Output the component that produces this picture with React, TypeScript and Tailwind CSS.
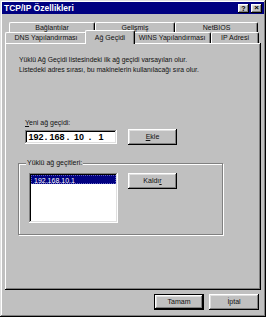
import React from "react"

const raised =
  "bg-[#c0c0c0] shadow-[inset_-1px_-1px_#000,inset_1px_1px_#fff,inset_-2px_-2px_#808080,inset_2px_2px_#dfdfdf]"
const sunken =
  "bg-white shadow-[inset_-1px_-1px_#fff,inset_1px_1px_#808080,inset_-2px_-2px_#dfdfdf,inset_2px_2px_#000]"

function Button({ children, isDefault = false }: { children: React.ReactNode; isDefault?: boolean }) {
  if (isDefault) {
    return (
      <div className="w-[50px] h-[16px] border border-black flex">
        <div className={`${raised} flex-1 flex items-center justify-center`}>{children}</div>
      </div>
    )
  }
  return <div className={`${raised} w-[50px] h-[16px] flex items-center justify-center`}>{children}</div>
}

function Tab({ label, w, selected = false }: { label: string; w: string; selected?: boolean }) {
  if (selected) {
    return (
      <div
        className={`${w} h-[14px] -mx-[2px] -mb-px relative z-10 bg-[#c0c0c0] border-t border-l border-white border-r border-r-black rounded-t-[2px] flex items-start justify-center pt-[2px] shadow-[inset_-1px_0_#808080]`}
      >
        {label}
      </div>
    )
  }
  return (
    <div
      className={`${w} h-full border-t border-l border-white border-r border-r-black rounded-t-[2px] flex items-center justify-center shadow-[inset_-1px_0_#808080]`}
    >
      {label}
    </div>
  )
}

export default function App() {
  return (
    <div className="w-[266px] h-[317px] bg-[#c0c0c0] flex flex-col font-['Liberation_Sans',Arial,sans-serif] text-[7px] leading-[10px] text-[#111] shadow-[inset_-1px_-1px_#000,inset_1px_1px_#dfdfdf,inset_-2px_-2px_#808080,inset_2px_2px_#fff] overflow-hidden">
      {/* タイトルバー */}
      <div className="mx-[2px] mt-[2px] h-[12px] bg-[#000080] flex items-center justify-between pl-[2px] pr-[2px]">
        <span className="text-white font-bold text-[8.5px] leading-[12px]">TCP/IP Özellikleri</span>
        <div className="flex gap-[2px]">
          <div className={`${raised} w-[11px] h-[9px] flex items-center justify-center font-bold text-[7px] leading-none text-black`}>?</div>
          <div className={`${raised} w-[11px] h-[9px] flex items-center justify-center font-bold text-[8px] leading-none text-black`}>×</div>
        </div>
      </div>

      {/* タブ */}
      <div className="mt-[8px] ml-[9px] flex h-[10px]">
        <Tab label="Bağlantılar" w="w-[86px]" />
        <Tab label="Gelişmiş" w="w-[80px]" />
        <Tab label="NetBIOS" w="w-[83px]" />
      </div>
      <div className="ml-[5px] flex items-end h-[11px]">
        <Tab label="DNS Yapılandırması" w="w-[82px]" />
        <Tab label="Ağ Geçidi" w="w-[50px]" selected />
        <Tab label="WINS Yapılandırması" w="w-[78px]" />
        <Tab label="IP Adresi" w="w-[48px]" />
      </div>

      {/* パネル */}
      <div className="ml-[5px] w-[256px] h-[247px] flex flex-col pl-[14px] pt-[12px] shadow-[inset_-1px_-1px_#000,inset_1px_1px_#fff,inset_-2px_-2px_#808080]">
        <p className="text-[6.8px]">Yüklü Ağ Geçidi listesindeki ilk ağ geçidi varsayılan olur.</p>
        <p className="text-[6.8px]">Listedeki adres sırası, bu makinelerin kullanılacağı sıra olur.</p>

        <div className="mt-[43px] ml-[6px]">
          <u>Y</u>eni ağ geçidi:
        </div>
        <div className="mt-[1px] ml-[6px] flex items-center gap-[11px]">
          <div className={`${sunken} w-[92px] h-[14px] flex items-center pl-[3px] font-bold text-[9px] text-black`}>
            <span className="w-[16px] text-center">192</span>
            <span className="w-[4px] text-center">.</span>
            <span className="w-[18px] text-center">168</span>
            <span className="w-[4px] text-center">.</span>
            <span className="w-[18px] text-center">10</span>
            <span className="w-[4px] text-center">.</span>
            <span className="w-[18px] text-center">1</span>
          </div>
          <div className={`${raised} w-[49px] h-[16px] flex items-center justify-center`}>
            <span>
              <u>E</u>kle
            </span>
          </div>
        </div>

        <fieldset className="mt-[13px] -ml-px w-[205px] border border-[#808080] shadow-[1px_1px_0_#fff,inset_1px_1px_0_#fff] pl-[10px] pb-[11px]">
          <legend className="ml-[-3px] px-[1px] relative bg-[#c0c0c0]">Yüklü ağ geçitleri:</legend>
          <div className="mt-[5px] flex items-start gap-[10px]">
            <div className={`${sunken} w-[89px] h-[50px] p-[2px]`}>
              <div className="h-[9px] bg-[#000080] text-white leading-[9px] pl-[2px] border border-dotted border-[#6060c0]">
                192.168.10.1
              </div>
            </div>
            <div className={`${raised} w-[49px] h-[16px] flex items-center justify-center`}>
              <span>
                Kaldı<u>r</u>
              </span>
            </div>
          </div>
        </fieldset>
      </div>

      {/* 下部ボタン */}
      <div className="mt-[4px] flex justify-end gap-[5px] pr-[7px]">
        <Button isDefault>Tamam</Button>
        <Button>İptal</Button>
      </div>
    </div>
  )
}
